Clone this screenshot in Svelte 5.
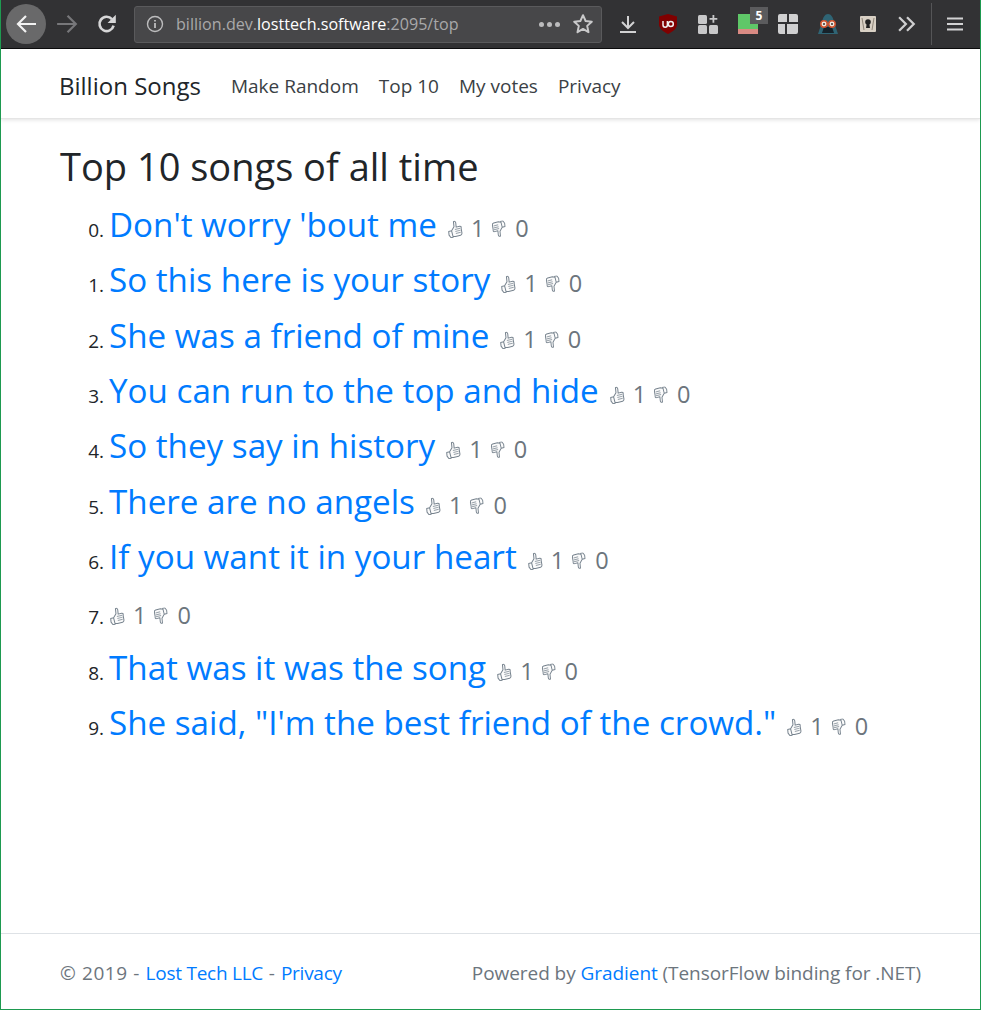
<script>
  const songs = ["Don't worry 'bout me","So this here is your story","She was a friend of mine","You can run to the top and hide","So they say in history","There are no angels","If you want it in your heart","","That was it was the song",`She said, "I'm the best friend of the crowd."`];
  const links = ["Make Random","Top 10","My votes","Privacy"];
</script>

{#snippet thumb(flip)}
  <svg class="thumb" class:flip viewBox="0 0 16 18" width="16" height="18">
    <g transform="rotate(-14 8 10)">
      <path d="M1.500 10h3v6.500H2.300L1 13.500zM4.500 10l3.300-3.500L8.500 1.500c1.400-.5 2.200.6 1.900 2.200L9.800 7.500h3.700c1.200 0 1.500 1.200.9 1.900l-.4 5.300c-.2 1-.9 1.800-1.800 1.800H7L4.500 15.500z" fill="#fbfbfb" stroke="#77838e" stroke-width="1" stroke-linejoin="round"/>
      <path d="M8 9.500h5.500M8 11.500h5.500M8 13.500h5" stroke="#9aa3ab" stroke-width="1"/>
    </g>
  </svg>
{/snippet}

<div class="window">
  <header class="chrome">
    <div class="back"><svg viewBox="0 0 20 20" width="20" height="20"><path d="M20 10H2M10 2l-8 8 8 8" fill="none" stroke="#f2f2f2" stroke-width="2.200"/></svg></div>
    <svg class="fwd" viewBox="0 0 20 20" width="22" height="22"><path d="M1 10h17M10.500 2.500 18 10l-7.500 7.500" fill="none" stroke="#77777a" stroke-width="2"/></svg>
    <svg class="reload" viewBox="0 0 20 20" width="22" height="22"><path d="M16 11.500a6.500 6.500 0 1 1-1.500-6" fill="none" stroke="#d7d7d8" stroke-width="2.400"/><path d="M18 1.500v7.500h-7.500z" fill="#d7d7d8"/></svg>
    <div class="url">
      <svg viewBox="0 0 18 18" width="18" height="18"><circle cx="9" cy="9" r="7.500" fill="none" stroke="#bdbdbe" stroke-width="1.400"/><path d="M9 8v5M9 5v1.600" stroke="#bdbdbe" stroke-width="1.800"/></svg>
      <span class="addr">billion.dev.<b>losttech.software</b>:2095/top</span>
      <span class="dots"><i></i><i></i><i></i></span>
      <svg viewBox="0 0 20 20" width="22" height="22"><path d="M10 2l2.400 5.300 5.600.6-4.200 3.800 1.200 5.700L10 14.500l-5 2.900 1.200-5.700L2 7.900l5.600-.6z" fill="none" stroke="#c9c9ca" stroke-width="1.800" stroke-linejoin="round"/></svg>
    </div>
    <div class="tools">
      <svg class="t1" viewBox="0 0 20 20" width="20" height="20"><path d="M10 2v11M4 8l6 6 6-6M2 18h16" fill="none" stroke="#d2d2d3" stroke-width="2"/></svg>
      <svg class="t2" viewBox="1 0 18 20" width="18" height="20"><path d="M1 2.500l9-2.500 9 2.500v8c0 4.500-5 7.500-9 9.500-4-2-9-5-9-9.500z" fill="#800000"/><path d="M5 7v4a2.200 2.200 0 0 0 4.400 0V7" fill="none" stroke="#eee" stroke-width="1.500"/><circle cx="12.800" cy="10" r="2.500" fill="none" stroke="#eee" stroke-width="1.500"/></svg>
      <svg class="t3" viewBox="0 0 20 20" width="20" height="20"><g fill="#c8c8c9"><rect x="0" y="1" width="9" height="9" rx="1.500"/><rect x="0" y="11" width="9" height="9" rx="1.500"/><rect x="11" y="11" width="9" height="9" rx="1.500"/><path d="M14.500 1h1.800v3h3v1.800h-3v3h-1.800v-3h-3V4h3z"/></g></svg>
      <div class="t4"><span class="green"></span><span class="badge">5</span></div>
      <svg class="t5" viewBox="0 0 20 20" width="20" height="20"><g fill="#d0d0d1"><path d="M2 0h7v8H0V2a2 2 0 0 1 2-2zM11 0h7a2 2 0 0 1 2 2v6h-9zM0 10h7v10H2a2 2 0 0 1-2-2zM9 10h11v8a2 2 0 0 1-2 2H9z"/></g></svg>
      <svg class="t6" viewBox="0 0 20 20" width="20" height="20"><path d="M10 0c3 0 5 3 6 8l4 12H0L4 8c1-5 3-8 6-8z" fill="#2f6474"/><path d="M4 19l2-6h8l2 6z" fill="#16222a"/><circle cx="6" cy="10" r="3.200" fill="#f0e6dc" stroke="#d2542e" stroke-width="1.500"/><circle cx="14" cy="10" r="3.200" fill="#f0e6dc" stroke="#d2542e" stroke-width="1.500"/><circle cx="6" cy="10" r="1" fill="#333"/><circle cx="14" cy="10" r="1" fill="#333"/></svg>
      <svg class="t7" viewBox="0 0 16 16" width="16" height="16"><rect width="16" height="16" rx="1" fill="#d8d0c4"/><circle cx="8" cy="6" r="2.800" fill="#222"/><path d="M6.800 7h2.400l.8 5H6z" fill="#222"/><path d="M2 2l2 12M14 2l-2 12" stroke="#8f8578" stroke-width="1"/></svg>
      <svg class="t8" viewBox="1 0 16 16" width="18" height="18"><path d="M2 2l6 6-6 6M9 2l6 6-6 6" fill="none" stroke="#cfcfd0" stroke-width="2"/></svg>
      <span class="sep"></span>
      <svg class="t9" viewBox="0 0 16 16" width="16" height="16"><path d="M0 2.500h16M0 8h16M0 13.500h16" stroke="#d2d2d3" stroke-width="2"/></svg>
    </div>
  </header>

  <nav class="navbar">
    <a class="brand" href="#b">Billion Songs</a>
    {#each links as l}<a class="nl" href="#n">{l}</a>{/each}
  </nav>

  <main>
    <h1>Top 10 songs of all time</h1>
    <ol start="0">
      {#each songs as s}
        <li>{#if s}<a href="#s">{s}</a>{/if}<span class="votes">{@render thumb(false)}<span class="n">1</span>{@render thumb(true)}<span class="n">0</span></span></li>
      {/each}
    </ol>
  </main>

  <footer>
    <span class="fl">© 2019 - <a href="#l">Lost Tech LLC</a> - <a href="#p">Privacy</a></span>
    <span class="fr">Powered by <a href="#g">Gradient</a> (TensorFlow binding for .NET)</span>
  </footer>
</div>

<style>
  :global(body) { margin: 0; background: #fff; }
  .window {
    box-sizing: border-box; height: 1010px; display: flex; flex-direction: column;
    border: 1px solid #1e9a50; border-top: 0;
    font-family: "Open Sans", sans-serif; color: #212529; overflow: hidden;
  }
  a { color: #007bff; text-decoration: none; }
  .chrome {
    height: 48px; flex: none; background: #323234; border-bottom: 1px solid #0c0c0d;
    display: flex; align-items: center; position: relative;
  }
  .back {
    width: 40px; height: 40px; border-radius: 50%; background: #69696a; margin-left: 5px;
    display: flex; align-items: center; justify-content: center;
  }
  .fwd { margin-left: 10px; }
  .reload { margin-left: 18px; }
  .url {
    box-sizing: border-box; width: 468px; height: 37px; margin-left: 16px; flex: none;
    background: #474749; border: 1px solid #5a5a5c; border-radius: 3px;
    display: flex; align-items: center; padding-left: 11px; padding-right: 7px;
  }
  .addr { margin-left: 12px; font-size: 16.1px; color: #a9a9aa; flex: 1; white-space: nowrap; }
  .addr b { font-weight: 400; color: #fff; }
  .dots { display: flex; gap: 3px; margin-right: 12px; }
  .dots i { width: 5px; height: 5px; border-radius: 50%; background: #bcbcbd; }
  .tools { display: flex; align-items: center; margin-left: 16px; }
  .t2 { margin-left: 21px; }
  .t3 { margin-left: 21px; }
  .t4 { margin-left: 20px; width: 20px; height: 20px; position: relative; }
  .green { position: absolute; inset: 0; background: linear-gradient(#5fc768 0 75%, #d98a83 75%); }
  .badge {
    position: absolute; left: 12px; top: -7px; width: 18px; height: 17px; background: #5b5b5d;
    color: #fff; font: 700 12px/17px "Open Sans", sans-serif; text-align: center;
  }
  .t5 { margin-left: 20px; }
  .t6 { margin-left: 20px; }
  .t7 { margin-left: 22px; }
  .t8 { margin-left: 22px; }
  .sep { width: 1px; height: 42px; background: #555557; margin-left: 15px; }
  .t9 { margin-left: 15px; }

  .navbar {
    height: 70px; flex: none; box-sizing: border-box; padding: 3px 0 0 58px; display: flex; align-items: center;
    background: #fff; box-shadow: 0 1px 4px rgba(0,0,0,.12); border-bottom: 1px solid #e5e5e5; position: relative;
  }
  .brand { font-size: 24px; color: #212529; margin-right: 30px; }
  .nl { font-size: 19px; color: #3a3f45; margin: 1px 20px 0 0; }

  main { flex: 1; padding: 23px 0 0 59px; }
  h1 { margin: 0 0 13px; font-size: 38px; line-height: 48px; font-weight: 400; color: #212529; }
  ol { margin: 0; padding: 0 0 0 49px; font-size: 19px; }
  li { height: 55.33px; white-space: nowrap; }
  li::before { content: "\200b"; font-size: 33.2px; line-height: 44px; }
  li a { font-size: 33.2px; line-height: 44px; margin-right: 10px; }
  .votes { color: #6c757d; font-size: 23.5px; }
  .n { margin: 0 7px 0 8px; }
  .thumb { vertical-align: -1px; }
  .flip { transform: rotate(180deg) scale(.95); }

  footer {
    height: 76px; flex: none; box-sizing: border-box; border-top: 1px solid #dee2e6;
    display: flex; justify-content: space-between; align-items: center; padding: 2px 59px 0;
    font-size: 19px; color: #6c757d;
  }
  .fl { letter-spacing: .6px; }
  .fl a { letter-spacing: -.25px; }
  .fr { letter-spacing: -.06px; }
</style>
